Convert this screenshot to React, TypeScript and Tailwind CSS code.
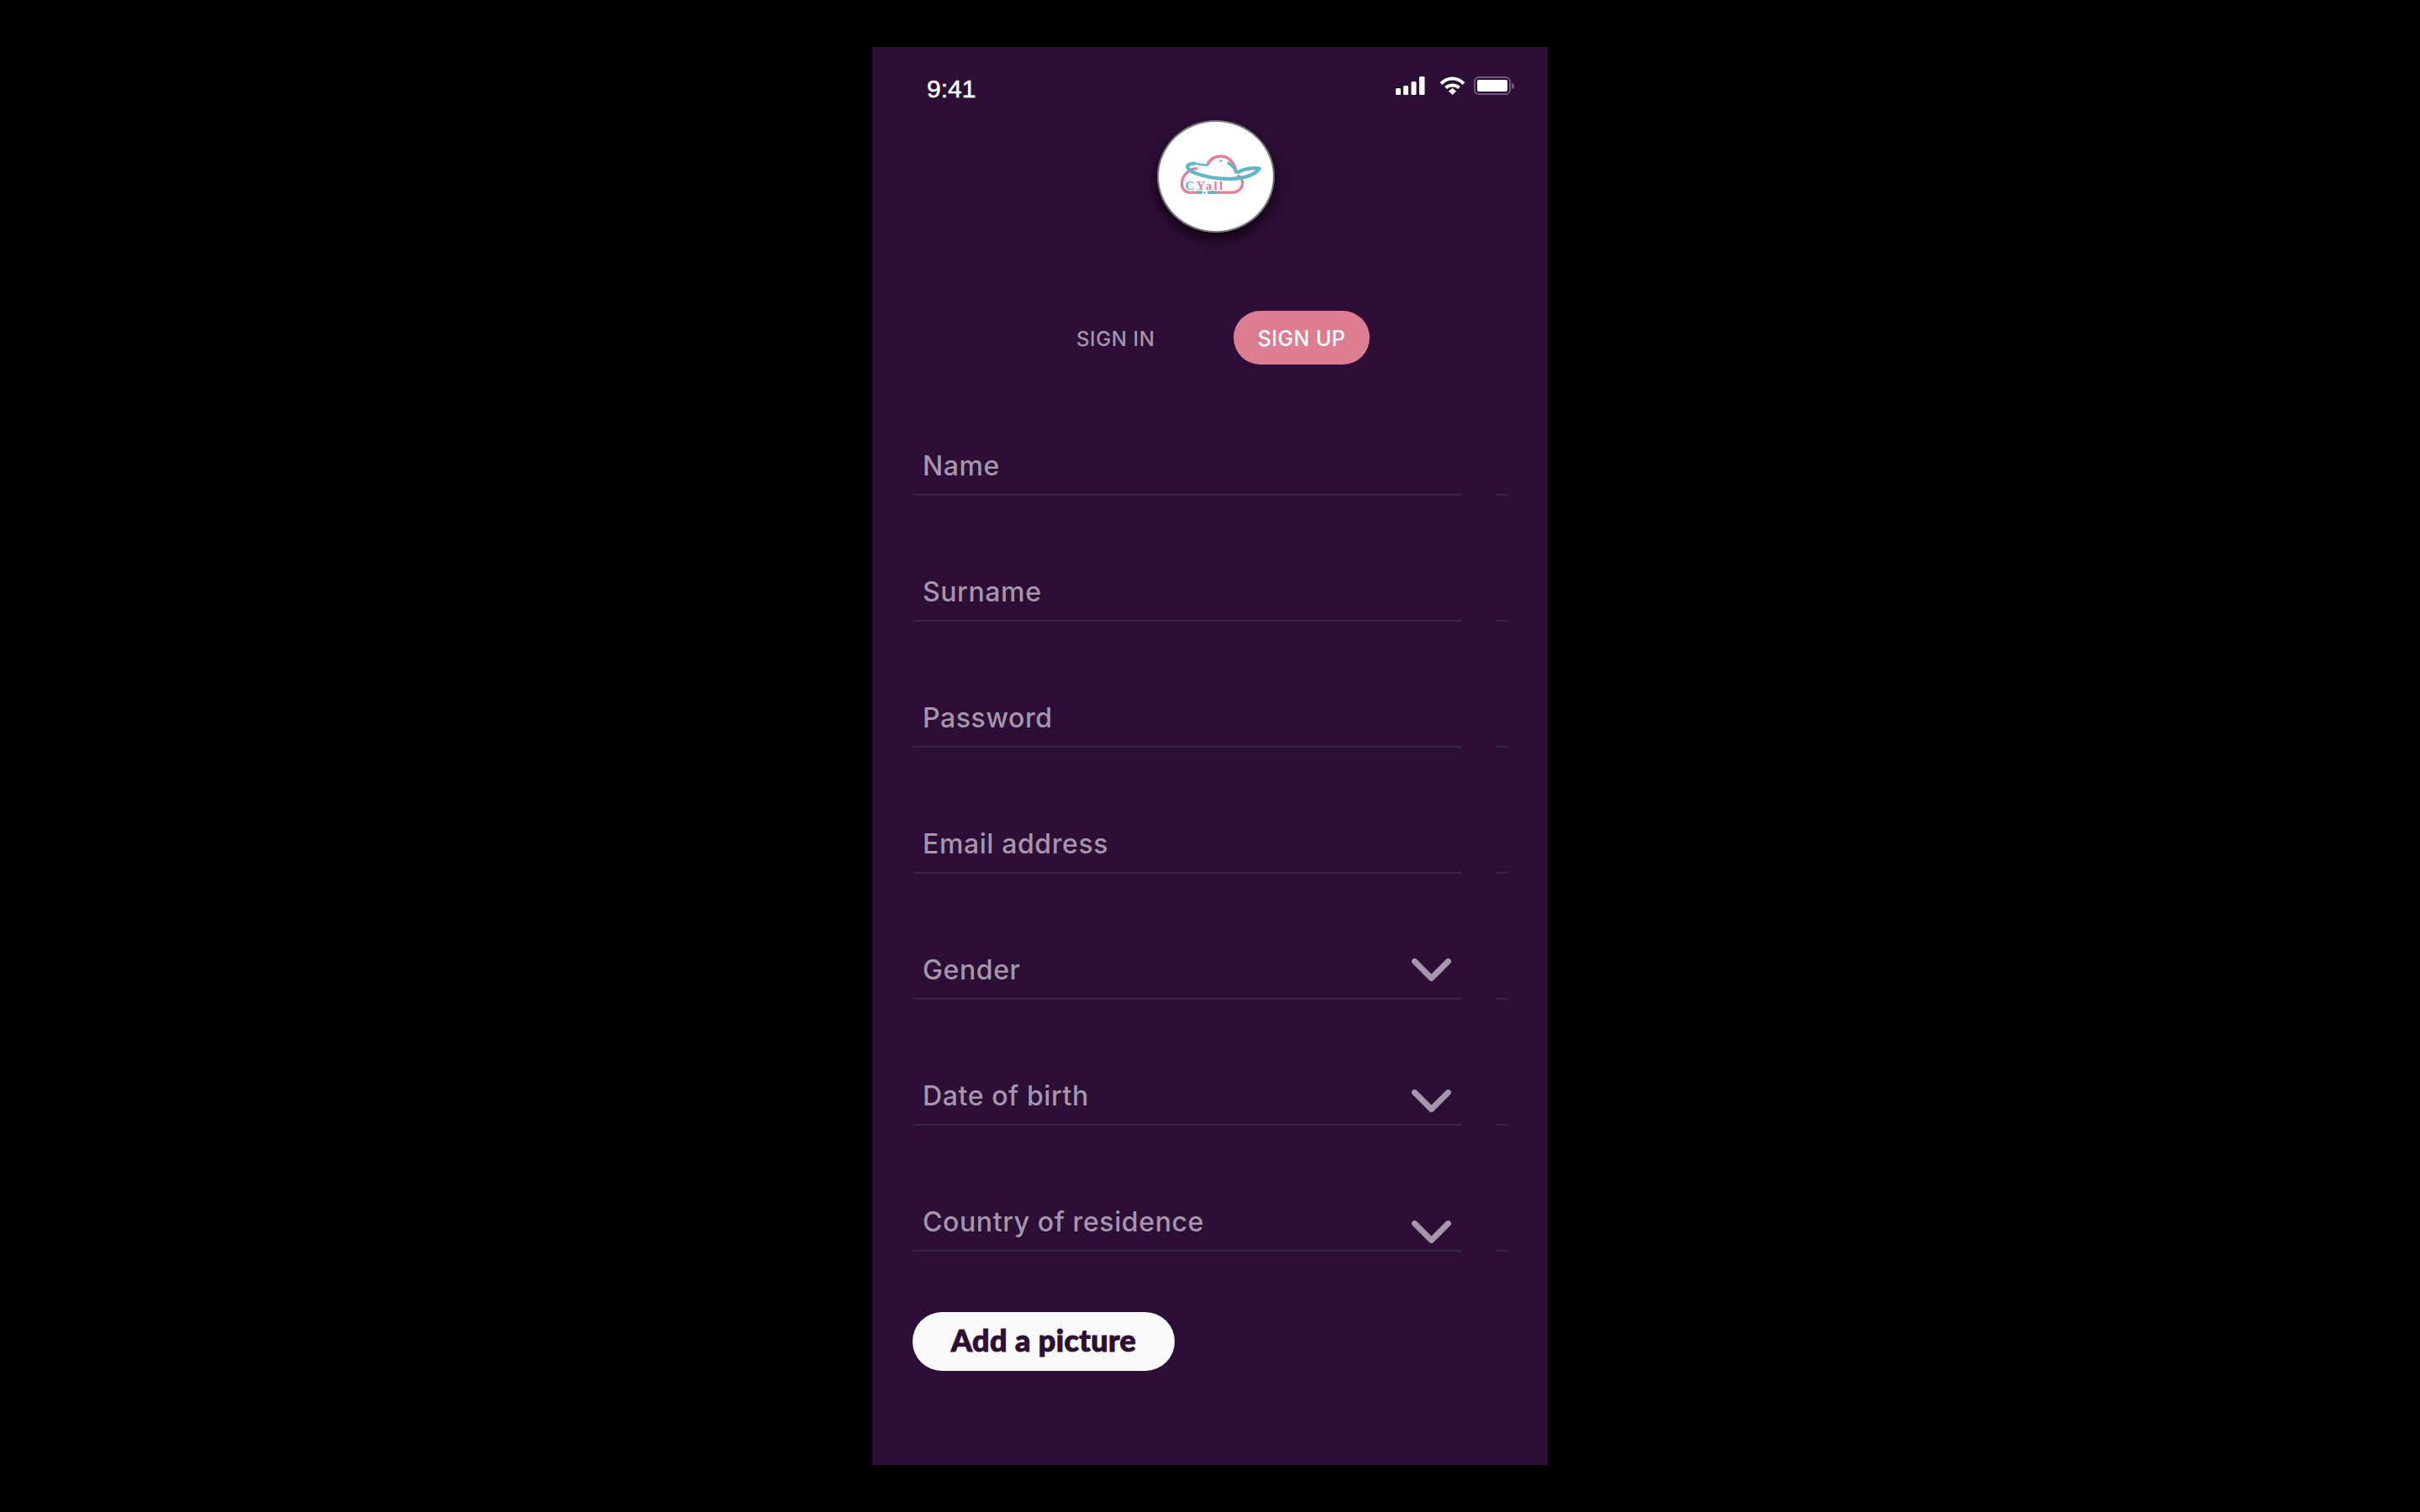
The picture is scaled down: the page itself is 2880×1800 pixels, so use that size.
import React from "react";

const fields = [
  { label: "Name" },
  { label: "Surname" },
  { label: "Password" },
  { label: "Email address" },
  { label: "Gender", chevron: "mb-[20px]" },
  { label: "Date of birth", chevron: "mb-[14px]" },
  { label: "Country of residence", chevron: "mb-[8px]" },
];

const StatusIcons = () => (
  <div className="flex items-start">
    <svg width="35" height="22" viewBox="0 0 35 22" fill="#fff">
      <rect x="0" y="14" width="6" height="8" rx="1.5" />
      <rect x="9" y="11" width="6" height="11" rx="1.5" />
      <rect x="18.500" y="6" width="6" height="16" rx="1.5" />
      <rect x="28" y="0" width="6.500" height="22" rx="1.5" />
    </svg>
    <svg className="ml-[17px]" width="31" height="22" viewBox="0 0 31 22" fill="none">
      <path d="M2 8.500C10 0.500 21 0.500 29 8.500" stroke="#fff" strokeWidth="4" />
      <path d="M7.500 13.500C12 9.500 19 9.500 23.500 13.500" stroke="#fff" strokeWidth="4" />
      <path d="M11 17.500L15.500 14L20 17.500L15.500 22Z" fill="#fff" />
    </svg>
    <div className="ml-[10px] flex items-center">
      <div className="h-[22px] w-[44px] rounded-[6px] border-2 border-[#6f5878] p-[2px]">
        <div className="h-full w-full rounded-[2px] bg-white" />
      </div>
      <div className="ml-[1px] h-[7px] w-[3px] rounded-r-full bg-[#6f5878]" />
    </div>
  </div>
);

const Logo = () => (
  <div className="h-[134px] w-[140px] rounded-[50%] border-2 border-[#777777] bg-white shadow-[0_8px_16px_rgba(0,0,0,0.7)]">
    <svg className="h-full w-full" viewBox="50 38 420 402" preserveAspectRatio="none" fill="none">
      <ellipse cx="255" cy="265" rx="130" ry="75" fill="#fbfbfb" />
      <path d="M192 210C165 210 136 232 135 265C134 285 146 298 165 298H210" stroke="#e0809a" strokeWidth="10" />
      <path d="M232 298H320C345 298 358 280 358 262C358 248 350 240 338 236" stroke="#e0809a" strokeWidth="10" />
      <path d="M190 298H210M230 298H262" stroke="#5fb7c5" strokeWidth="10" />
      <circle cx="218" cy="299" r="4" fill="#5fb7c5" />
      <path d="M230 194C240 172 262 163 282 165C312 168 332 195 335 228" stroke="#e0809a" strokeWidth="11" />
      <path d="M302 188C322 198 332 214 335 228" stroke="#5fb7c5" strokeWidth="10" />
      <path d="M185 192C170 190 152 196 156 206C165 226 230 246 295 248C350 250 405 236 420 210C395 205 360 212 338 226" stroke="#5fb7c5" strokeWidth="13" strokeLinejoin="round" />
      <path d="M185 192C200 194 225 200 232 196" stroke="#5fb7c5" strokeWidth="8" />
      <circle cx="278" cy="182" r="4.500" fill="#5fb7c5" />
      <text x="147" y="288" fontFamily="'Liberation Serif', serif" fontWeight="700" fontSize="46" letterSpacing="7">
        <tspan fill="#5fb7c5">C</tspan>
        <tspan fill="#e0809a">Yall</tspan>
      </text>
    </svg>
  </div>
);

const Chevron = ({ className }: { className: string }) => (
  <svg className={className} width="47" height="27" viewBox="0 0 47 27" fill="none">
    <polyline points="3.500,3.500 23.500,23.500 43.500,3.500" stroke="#a596ac" strokeWidth="7" strokeLinecap="round" strokeLinejoin="round" />
  </svg>
);

export default function App() {
  return (
    <div className="flex h-screen w-full items-center justify-center bg-black font-['Inter',sans-serif]">
      <div className="flex h-[1688px] w-[804px] flex-col bg-[#2c0e36]">
        <div className="flex h-[87px] items-start justify-between pl-[65px] pr-[40px] pt-[35px]">
          <span className="font-['Liberation_Sans',sans-serif] text-[30px] leading-[30px] text-white [-webkit-text-stroke:0.5px_#ffffff]">9:41</span>
          <StatusIcons />
        </div>

        <div className="ml-[339px]">
          <Logo />
        </div>

        <div className="ml-[243px] mt-[93px] flex items-center gap-[93px]">
          <span className="mt-[3px] w-[94px] whitespace-nowrap text-[24px] font-medium tracking-[0.6px] text-[#a596ac]">SIGN IN</span>
          <div className="flex h-[64px] w-[162px] items-center justify-center rounded-[32px] bg-[#dc7d92] pt-[3px] text-[25px] font-medium tracking-[0.4px] text-white">
            SIGN UP
          </div>
        </div>

        <div className="ml-[49px] mt-[6px] flex flex-col">
          {fields.map((field) => (
            <div key={field.label} className="flex h-[150px] items-end">
              <div className="flex h-[80px] w-[652px] items-end justify-between border-b-2 border-[#3a2646] pl-[11px] pr-[12px]">
                <span className="mb-[13px] text-[32px] font-medium leading-[40px] tracking-[0.6px] text-[#a596ac]">{field.label}</span>
                {field.chevron && <Chevron className={field.chevron} />}
              </div>
              <div className="ml-[41px] w-[14px] border-b-2 border-[#3a2646]" />
            </div>
          ))}
        </div>

        <div className="ml-[48px] mt-[72px] flex h-[70px] w-[312px] items-center justify-center rounded-[35px] bg-[#fafafa] pb-[4px]">
          <span className="font-['Lato',sans-serif] text-[36px] font-black tracking-[0.4px] text-[#2c0e36] [-webkit-text-stroke:1px_#2c0e36]">Add a picture</span>
        </div>
      </div>
    </div>
  );
}
